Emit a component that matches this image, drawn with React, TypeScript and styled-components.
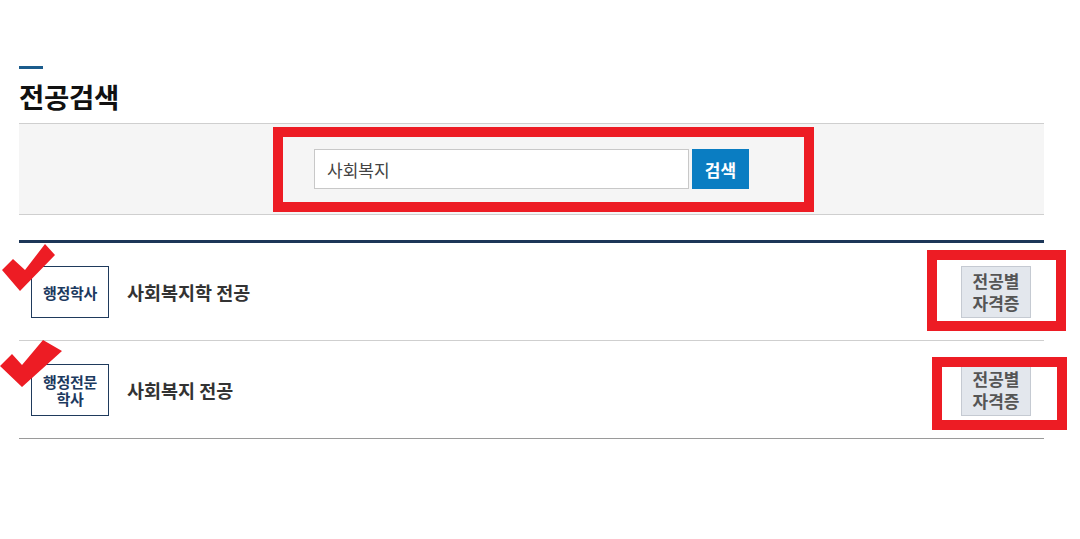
import React from "react";
import styled, { createGlobalStyle } from "styled-components";

const Global = createGlobalStyle`
  html, body { margin: 0; padding: 0; background: #fff; }
  body { font-family: "Noto Sans CJK KR", "Noto Sans", sans-serif; color: #222; }
  * { box-sizing: border-box; }
`;

const Page = styled.div`
  width: 1025px;
  margin-left: 19px;
  padding-top: 66px;
`;

const Accent = styled.div`
  width: 24px;
  height: 3px;
  background: #1b5c8c;
`;

const Title = styled.h2`
  margin: 14px 0 14px;
  font-size: 27.5px;
  line-height: 26px;
  font-weight: 700;
  color: #111;
  letter-spacing: -0.3px;
`;

const SearchArea = styled.div`
  position: relative;
  height: 92px;
  border-top: 1px solid #cfcfcf;
  border-bottom: 1px solid #cfcfcf;
  background: #f5f5f5;
  display: flex;
  align-items: center;
  justify-content: center;
  gap: 3px;
`;

const Input = styled.input`
  width: 375px;
  height: 40px;
  border: 1px solid #c8c8c8;
  background: #fff;
  padding: 0 12px;
  font-family: inherit;
  font-size: 17px;
  color: #444;
  outline: none;
`;

const SearchButton = styled.button`
  width: 57px;
  height: 40px;
  border: none;
  background: #0a7dc2;
  color: #fff;
  font-family: inherit;
  font-size: 17px;
  font-weight: 700;
  cursor: pointer;
  padding: 0;
`;

const Mark = styled.div<{ $l: number; $t: number; $w: number; $h: number }>`
  position: absolute;
  left: ${(p) => p.$l}px;
  top: ${(p) => p.$t}px;
  width: ${(p) => p.$w}px;
  height: ${(p) => p.$h}px;
  border: 10px solid #ed1c24;
  z-index: 2;
  pointer-events: none;
`;

const List = styled.div`
  margin-top: 25px;
  border-top: 3px solid #1c3658;
`;

const Row = styled.div<{ $last?: boolean }>`
  position: relative;
  display: flex;
  align-items: center;
  padding: 23px 13px 22px 12px;
  border-bottom: 1px solid ${(p) => (p.$last ? "#9a9a9a" : "#cfcfcf")};
`;

const Badge = styled.div`
  width: 78px;
  height: 52px;
  border: 1px solid #1f3a5c;
  display: flex;
  align-items: center;
  justify-content: center;
  text-align: center;
  font-size: 15px;
  line-height: 17px;
  font-weight: 700;
  color: #1d3a5f;
  flex-shrink: 0;
  letter-spacing: -0.3px;
`;

const Major = styled.div`
  margin-left: 18px;
  flex: 1;
  font-size: 18.5px;
  font-weight: 700;
  color: #333;
`;

const CertButton = styled.button`
  width: 70px;
  height: 52px;
  border: 1px solid #c5cad2;
  background: #e3e7ed;
  color: #555;
  font-family: inherit;
  font-size: 17px;
  line-height: 22px;
  font-weight: 700;
  padding: 0;
  cursor: pointer;
`;

const CheckSvg = styled.svg<{ $t: number }>`
  position: absolute;
  left: -19px;
  top: ${(p) => p.$t}px;
  z-index: 2;
`;

function Check({ top, points }: { top: number; points: string }) {
  return (
    <CheckSvg $t={top} width="64" height="50" viewBox="0 0 64 50">
      <polygon points={points} fill="#ed1c24" />
    </CheckSvg>
  );
}

export default function App() {
  return (
    <>
      <Global />
      <Page>
        <Accent />
        <Title>전공검색</Title>
        <SearchArea>
          <Input defaultValue="사회복지" />
          <SearchButton>검색</SearchButton>
          <Mark $l={254} $t={3} $w={541} $h={85} />
        </SearchArea>
        <List>
          <Row>
            <Check top={0} points="2,27 13,16 25,27 45,1 55,12 20,48" />
            <Badge>행정학사</Badge>
            <Major>사회복지학 전공</Major>
            <CertButton>
              전공별
              <br />
              자격증
            </CertButton>
            <Mark $l={908} $t={7} $w={139} $h={81} />
          </Row>
          <Row $last>
            <Check top={-2} points="0,27 12,15 22,26 43,1 62,12 22,48" />
            <Badge>
              행정전문
              <br />
              학사
            </Badge>
            <Major>사회복지 전공</Major>
            <CertButton>
              전공별
              <br />
              자격증
            </CertButton>
            <Mark $l={913} $t={16} $w={135} $h={73} />
          </Row>
        </List>
      </Page>
    </>
  );
}
